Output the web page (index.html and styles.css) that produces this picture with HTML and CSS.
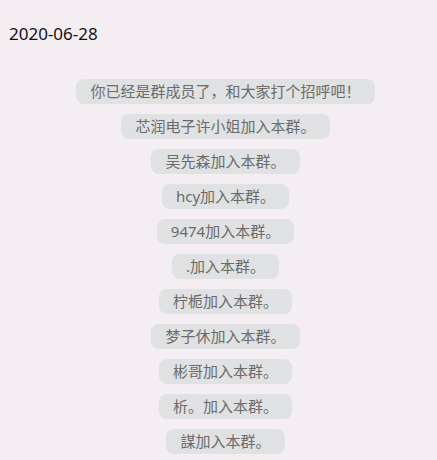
FILE: index.html
```html
<!DOCTYPE html>
<html lang="zh">
<head>
<meta charset="utf-8">
<link rel="stylesheet" href="styles.css">
</head>
<body>
<div class="page">
  <div class="date">2020-06-28</div>
  <div class="list">
    <div class="pill">你已经是群成员了，和大家打个招呼吧！</div>
    <div class="pill">芯润电子许小姐加入本群。</div>
    <div class="pill">吴先森加入本群。</div>
    <div class="pill">hcy加入本群。</div>
    <div class="pill">9474加入本群。</div>
    <div class="pill">.加入本群。</div>
    <div class="pill">柠栀加入本群。</div>
    <div class="pill">梦子休加入本群。</div>
    <div class="pill">彬哥加入本群。</div>
    <div class="pill">析。加入本群。</div>
    <div class="pill">謀加入本群。</div>
  </div>
</div>
</body>
</html>
```
FILE: styles.css
```css
html, body {
  margin: 0;
  padding: 0;
  background: #f4eef3;
  font-family: "Noto Sans", "Noto Sans CJK SC", sans-serif;
}
.page {
  height: 460px;
  overflow: hidden;
}
.date {
  padding: 22px 0 0 9px;
  font-size: 17px;
  line-height: 24px;
  color: #111;
}
.list {
  margin-top: 33px;
  padding-left: 14px;
  display: flex;
  flex-direction: column;
  align-items: center;
  gap: 10px;
}
.pill {
  height: 25px;
  line-height: 25px;
  padding: 0 14px;
  border-radius: 8px;
  background: #e0e1e2;
  color: #6b6b6b;
  font-size: 15px;
  white-space: nowrap;
}
```
